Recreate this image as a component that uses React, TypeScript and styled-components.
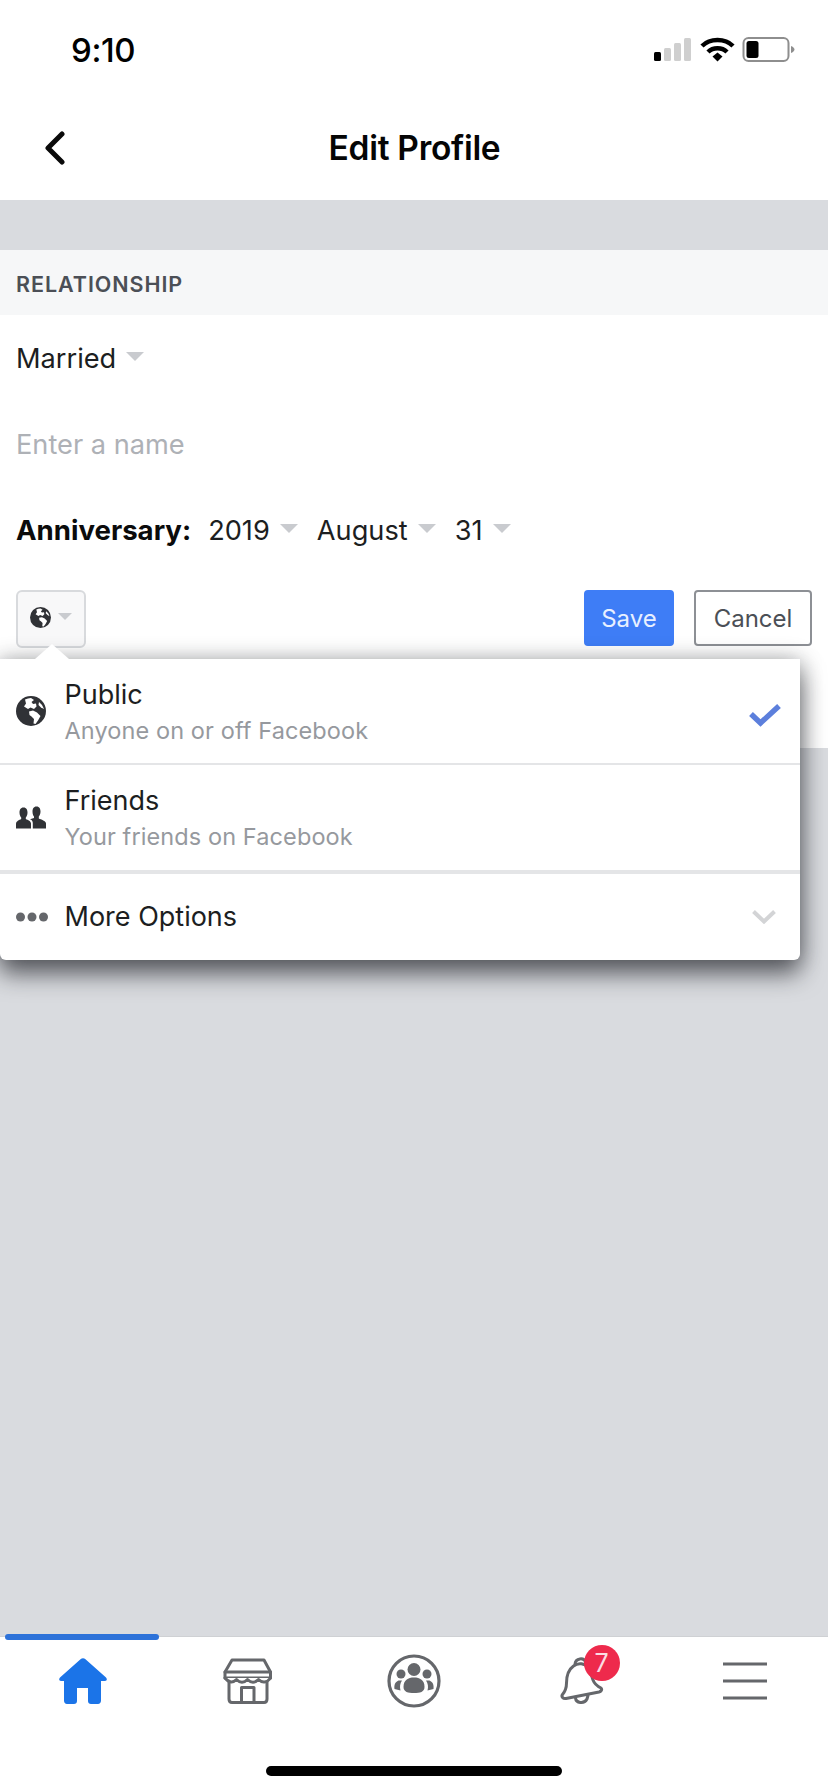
import React from "react"
import styled, { createGlobalStyle } from "styled-components"

const GlobalStyle = createGlobalStyle`
    html, body {
        margin: 0;
        padding: 0;
        background: #d9dbdf;
    }
    * {
        box-sizing: border-box;
    }
    body {
        font-family: Inter, "Liberation Sans", sans-serif;
    }
`

const Page = styled.div`
    width: 828px;
    height: 1792px;
    display: flex;
    flex-direction: column;
    overflow: hidden;
    background: #d9dbdf;
`

const StatusBar = styled.div`
    height: 100px;
    flex: none;
    background: #fff;
    display: flex;
    align-items: center;
    justify-content: space-between;
    padding: 0 33px 0 71px;
`

const Clock = styled.span`
    font-size: 33px;
    font-weight: 500;
    letter-spacing: -0.4px;
    color: #000;
`

const NavBar = styled.div`
    height: 100px;
    flex: none;
    background: #fff;
    display: grid;
    grid-template-columns: 1fr auto 1fr;
    align-items: center;
    padding-bottom: 4px;
`

const BackIcon = styled.svg`
    margin-left: 44px;
`

const Title = styled.h1`
    margin: 0 0 0 1px;
    font-size: 33.5px;
    font-weight: 600;
    letter-spacing: -0.3px;
    color: #050505;
`

const Spacer = styled.div`
    height: 50px;
    flex: none;
`

const SectionHeader = styled.div`
    height: 65px;
    flex: none;
    background: #f6f7f8;
    display: flex;
    align-items: center;
    padding: 3px 16px 0;
    font-size: 21.5px;
    font-weight: 600;
    letter-spacing: 0.95px;
    color: #4b4f56;
`

const Card = styled.div`
    background: #fff;
    height: 433px;
    flex: none;
`

const FieldRow = styled.div`
    height: 86px;
    display: flex;
    align-items: center;
    padding: 0 16px;
    font-size: 27.2px;
    color: #1c1e21;
`

const Placeholder = styled.span`
    color: #aeb1b6;
`

const Label = styled.strong`
    font-size: 27.6px;
    font-weight: 700;
    color: #0b0b0b;
    margin-right: 17px;
`

const Select = styled.span`
    display: inline-flex;
    align-items: center;
    gap: 10px;
    margin-right: 19px;
`

const Caret = styled.i<{ $size?: number }>`
    display: block;
    width: 0;
    height: 0;
    margin-top: -3px;
    border-left: ${p => p.$size ?? 9}px solid transparent;
    border-right: ${p => p.$size ?? 9}px solid transparent;
    border-top: ${p => p.$size ?? 9}px solid #c9cbcf;
`

const ActionRow = styled.div`
    position: relative;
    display: flex;
    align-items: flex-start;
    padding: 17px 16px 0;
    height: 100px;
`

const PrivacyButton = styled.div`
    width: 70px;
    height: 58px;
    display: flex;
    align-items: center;
    justify-content: center;
    gap: 7px;
    padding-bottom: 3px;
    border: 2px solid #d8dadd;
    border-radius: 6px;
    background: #f8f8f9;
    margin-right: auto;
`

const Button = styled.div<{ $primary?: boolean }>`
    height: 56px;
    display: flex;
    align-items: center;
    justify-content: center;
    border-radius: 4px;
    font-size: 24px;
    width: ${p => (p.$primary ? 90 : 118)}px;
    margin-left: ${p => (p.$primary ? 0 : 20)}px;
    background: ${p => (p.$primary ? "#3e7df6" : "#fff")};
    color: ${p => (p.$primary ? "#e8f0ff" : "#4b4f56")};
    border: 2px solid ${p => (p.$primary ? "#3e7df6" : "#8d9095")};
`

const Popup = styled.div`
    position: absolute;
    left: 0;
    top: 86px;
    width: 800px;
    background: #fff;
    border-radius: 0 0 6px 6px;
    box-shadow: 0 14px 24px rgba(20, 22, 28, 0.6), 0 0 22px rgba(20, 22, 28, 0.3);
    z-index: 5;

    &::before {
        content: "";
        position: absolute;
        left: 35px;
        top: -15px;
        border-left: 17px solid transparent;
        border-right: 17px solid transparent;
        border-bottom: 15px solid #fff;
    }
`

const OptionRow = styled.div<{ $height: number; $divider?: number }>`
    height: ${p => p.$height}px;
    display: flex;
    align-items: center;
    border-bottom: ${p => p.$divider ?? 0}px solid #e4e5e7;
`

const OptionIcon = styled.div`
    width: 64.5px;
    flex: none;
    display: flex;
    justify-content: flex-start;
    padding-left: 16px;
`

const OptionText = styled.div`
    flex: 1;
    display: flex;
    flex-direction: column;
    gap: 7px;
    margin-top: 2px;
`

const OptionTitle = styled.div`
    flex: 1;
    font-size: 27px;
    line-height: 30px;
    color: #1c1e21;
`

const OptionSub = styled.div`
    font-size: 23.5px;
    line-height: 28px;
    letter-spacing: 0.1px;
    color: #96999e;
`

const OptionEnd = styled.div<{ $inset: number; $drop?: number }>`
    width: 52px;
    flex: none;
    display: flex;
    padding-left: ${p => p.$inset}px;
    margin-top: ${p => p.$drop ?? 0}px;
`

const Fill = styled.div`
    flex: 1;
`

const TabBar = styled.div`
    height: 156px;
    flex: none;
    position: relative;
    background: #fff;
    border-top: 1px solid #cfd1d4;
    display: flex;
    flex-direction: column;
    align-items: center;
`

const ActiveMark = styled.div`
    position: absolute;
    left: 5px;
    top: -3px;
    width: 154px;
    height: 6px;
    border-radius: 3px;
    background: #2d72d9;
`

const Tabs = styled.div`
    width: 100%;
    height: 88px;
    flex: none;
    display: flex;
`

const Tab = styled.div`
    flex: 1;
    display: flex;
    align-items: center;
    justify-content: center;
`

const BellWrap = styled.div`
    position: relative;
    display: flex;
    margin-left: 4px;
`

const Badge = styled.span`
    position: absolute;
    left: 24px;
    top: -12px;
    width: 36px;
    height: 36px;
    border-radius: 50%;
    background: #ee2a4c;
    color: #fbdde3;
    font-size: 25px;
    display: flex;
    align-items: center;
    justify-content: center;
`

const HomeIndicator = styled.div`
    width: 296px;
    height: 10px;
    margin-top: 41px;
    border-radius: 5px;
    background: #000;
`

const Globe = ({ size }: { size: number }) => (
    <svg width={size} height={size} viewBox="0 0 30 30">
        <circle cx="15" cy="15" r="15" fill="#303236" />
        <path d="M9 3.5 C11 2.5 13 2 15 2 L18 4 L15.5 6 L17 8 L20 7.5 L20.5 10.5 L18 13 L14.5 11.5 L12 13 L8 10.5 L10 7.5 Z" fill="#fff" />
        <path d="M13 15.5 L17 14.5 L21 16.5 L24.5 20 L22 24.5 L19.5 28 L17.5 27.5 L18 23 L15.5 20.5 L13.5 19 Z" fill="#fff" />
        <path d="M23 6 L26 9 L28 13 L25 11.5 L22.5 9 Z" fill="#fff" />
    </svg>
)

const Friends = () => (
    <svg width="30" height="23" viewBox="0 0 30 22" fill="#303236">
        <path d="M7.5 1 C10.5 1 11.5 3.5 11.5 6 C11.5 8.5 10.6 10 9.8 11 L9.8 12.5 C12 13.5 15 14.5 15 17 L15 22 L0 22 L0 17.5 C0 14.5 3.2 13.6 5.2 12.5 L5.2 11 C4.4 10 3.5 8.5 3.5 6 C3.5 3.5 4.5 1 7.5 1 Z" />
        <path d="M20.5 0 C23.5 0 24.5 2.5 24.5 5 C24.5 7.5 23.6 9 22.8 10 L22.8 12 C25 13 30 14.5 30 17 L30 22 L16.8 22 L16.8 16.5 C16.8 14.5 15.5 13.5 14 12.8 L18 11.5 L18 10 C17.2 9 16.5 7.5 16.5 5 C16.5 2.5 17.5 0 20.5 0 Z" />
    </svg>
)

const StatusIcons = () => (
    <svg width="141" height="26" viewBox="0 0 141 26">
        <rect x="0" y="15" width="7" height="9" rx="1.5" fill="#000" />
        <rect x="10" y="11" width="7" height="13" rx="1.5" fill="#cfcfcf" />
        <rect x="20" y="6" width="7" height="18" rx="1.5" fill="#cfcfcf" />
        <rect x="30" y="1" width="7" height="23" rx="1.5" fill="#cfcfcf" />
        <path d="M48 9 C56 1 71 1 79 9" fill="none" stroke="#000" strokeWidth="4.5" />
        <path d="M54 15 C59 10 68 10 73 15" fill="none" stroke="#000" strokeWidth="4.5" />
        <path d="M58.5 19.5 L63.5 15.5 L68.5 19.5 L63.5 24.5 Z" fill="#000" />
        <rect x="89.5" y="1" width="45" height="23" rx="5" fill="none" stroke="#8e8e8e" strokeWidth="2" />
        <rect x="92.5" y="4" width="12" height="17" rx="2.5" fill="#000" />
        <path d="M137 9 C139.5 10 140.5 11.5 140.5 12.5 C140.5 13.5 139.5 15 137 16 Z" fill="#8e8e8e" />
    </svg>
)

const HomeIcon = () => (
    <svg width="48" height="46" viewBox="0 0 48 46" fill="#1b74e8">
        <path d="M21.5 1.2 C23 -0.2 25 -0.2 26.5 1.2 L47 19.5 C48.5 21 47.8 23 46 23 L42 23 L42 42.5 C42 44.5 40.8 46 39 46 L32 46 C30.2 46 29 45 29 43 L29 30 L18 30 L18 43 C18 45 16.8 46 15 46 L8 46 C6.2 46 5 44.5 5 42.5 L5 23 L2 23 C0.2 23 -0.5 21 1 19.5 Z" />
    </svg>
)

const StoreIcon = () => (
    <svg width="50" height="46" viewBox="0 0 50 46" fill="none" stroke="#65676b" strokeWidth="3" strokeLinejoin="round" strokeLinecap="round">
        <path d="M9 2 L41 2 L47.5 14 L47.5 20 L2 20 L2 14 Z" fill="none" />
        <path d="M2 14 L47.5 14" />
        <path d="M2 20 C6 25 10 25 13.5 21.5 C17 25 21 25 24.5 21.5 C28 25 32 25 35.5 21.5 C39 25 44 25 47.5 20" fill="#fff" />
        <path d="M6 24 L6 41 C6 43.5 7 44.5 9 44.5 L41 44.5 C43 44.5 44 43.5 44 41 L44 24" />
        <path d="M18.5 44 L18.5 29.5 L31 29.5 L31 44" />
    </svg>
)

const GroupsIcon = () => (
    <svg width="54" height="54" viewBox="0 0 54 54" fill="#65676b">
        <circle cx="27" cy="27" r="25" fill="none" stroke="#65676b" strokeWidth="3.2" />
        <circle cx="27" cy="15.5" r="6.5" />
        <circle cx="14" cy="20" r="4.5" />
        <circle cx="40" cy="20" r="4.5" />
        <path d="M16.5 33 C16.5 26 21 23.5 27 23.5 C33 23.5 37.5 26 37.5 33 C37.5 38 33 39 27 39 C21 39 16.5 38 16.5 33 Z" />
        <path d="M11.5 26.5 C8 28 7 31 7.5 35 L13.5 36.5 C12.5 33 13 29 15 26.5 Z" />
        <path d="M42.5 26.5 C46 28 47 31 46.5 35 L40.5 36.5 C41.5 33 41 29 39 26.5 Z" />
    </svg>
)

const BellIcon = () => (
    <svg width="44" height="48" viewBox="0 0 44 48" fill="none" stroke="#65676b" strokeWidth="3" strokeLinejoin="round" strokeLinecap="round">
        <path d="M15 7 C15.5 1 24 0 26 5.5" />
        <path d="M13.5 9 C18 5.5 25 6 28 11 C31 15 31.5 19 33 23 C34.5 27 38 29.5 41 31 C42.5 32.5 41 34.5 39 35 L6 41.5 C3 42 1 39.5 2.5 37.5 C5.5 34 6.5 31 6.5 26 C6.5 20 8 13 13.5 9 Z" />
        <path d="M15.5 41 C16 46 24 47.5 27 42 L28 38.5" />
    </svg>
)

const MenuIcon = () => (
    <svg width="44" height="38" viewBox="0 0 44 38" stroke="#65676b" strokeWidth="3">
        <path d="M0 2 L44 2 M0 19 L44 19 M0 36 L44 36" />
    </svg>
)

const App = () => {
    return (
        <Page>
            <GlobalStyle />
            <StatusBar>
                <Clock>9:10</Clock>
                <StatusIcons />
            </StatusBar>
            <NavBar>
                <BackIcon width="22" height="34" viewBox="0 0 22 34" fill="none" stroke="#0a0a0a" strokeWidth="5" strokeLinecap="round" strokeLinejoin="round">
                    <path d="M18 3 L4 17 L18 31" />
                </BackIcon>
                <Title>Edit Profile</Title>
            </NavBar>
            <Spacer />
            <SectionHeader>RELATIONSHIP</SectionHeader>
            <Card>
                <FieldRow>
                    <Select>Married <Caret /></Select>
                </FieldRow>
                <FieldRow>
                    <Placeholder>Enter a name</Placeholder>
                </FieldRow>
                <FieldRow>
                    <Label>Anniversary:</Label>
                    <Select>2019 <Caret /></Select>
                    <Select>August <Caret /></Select>
                    <Select>31 <Caret /></Select>
                </FieldRow>
                <ActionRow>
                    <PrivacyButton>
                        <Globe size={21} />
                        <Caret $size={7} />
                    </PrivacyButton>
                    <Button $primary>Save</Button>
                    <Button>Cancel</Button>
                    <Popup>
                        <OptionRow $height={106} $divider={2}>
                            <OptionIcon><Globe size={30} /></OptionIcon>
                            <OptionText>
                                <OptionTitle>Public</OptionTitle>
                                <OptionSub>Anyone on or off Facebook</OptionSub>
                            </OptionText>
                            <OptionEnd $inset={1} $drop={8}>
                                <svg width="32" height="24" viewBox="0 0 32 24" fill="none" stroke="#5c7fdc" strokeWidth="5.5">
                                    <path d="M2 11 L11.5 20 L30 3" />
                                </svg>
                            </OptionEnd>
                        </OptionRow>
                        <OptionRow $height={109} $divider={4}>
                            <OptionIcon><Friends /></OptionIcon>
                            <OptionText>
                                <OptionTitle>Friends</OptionTitle>
                                <OptionSub>Your friends on Facebook</OptionSub>
                            </OptionText>
                        </OptionRow>
                        <OptionRow $height={86}>
                            <OptionIcon>
                                <svg width="32" height="10" viewBox="0 0 32 10" fill="#65676b">
                                    <circle cx="4.5" cy="5" r="4.5" />
                                    <circle cx="16" cy="5" r="4.5" />
                                    <circle cx="27.5" cy="5" r="4.5" />
                                </svg>
                            </OptionIcon>
                            <OptionTitle>More Options</OptionTitle>
                            <OptionEnd $inset={4}>
                                <svg width="24" height="14" viewBox="0 0 24 14" fill="none" stroke="#d3d4d6" strokeWidth="4">
                                    <path d="M1.5 1.5 L12 11.5 L22.5 1.5" />
                                </svg>
                            </OptionEnd>
                        </OptionRow>
                    </Popup>
                </ActionRow>
            </Card>
            <Fill />
            <TabBar>
                <ActiveMark />
                <Tabs>
                    <Tab><HomeIcon /></Tab>
                    <Tab><StoreIcon /></Tab>
                    <Tab><GroupsIcon /></Tab>
                    <Tab>
                        <BellWrap>
                            <BellIcon />
                            <Badge>7</Badge>
                        </BellWrap>
                    </Tab>
                    <Tab><MenuIcon /></Tab>
                </Tabs>
                <HomeIndicator />
            </TabBar>
        </Page>
    )
}

export default App
